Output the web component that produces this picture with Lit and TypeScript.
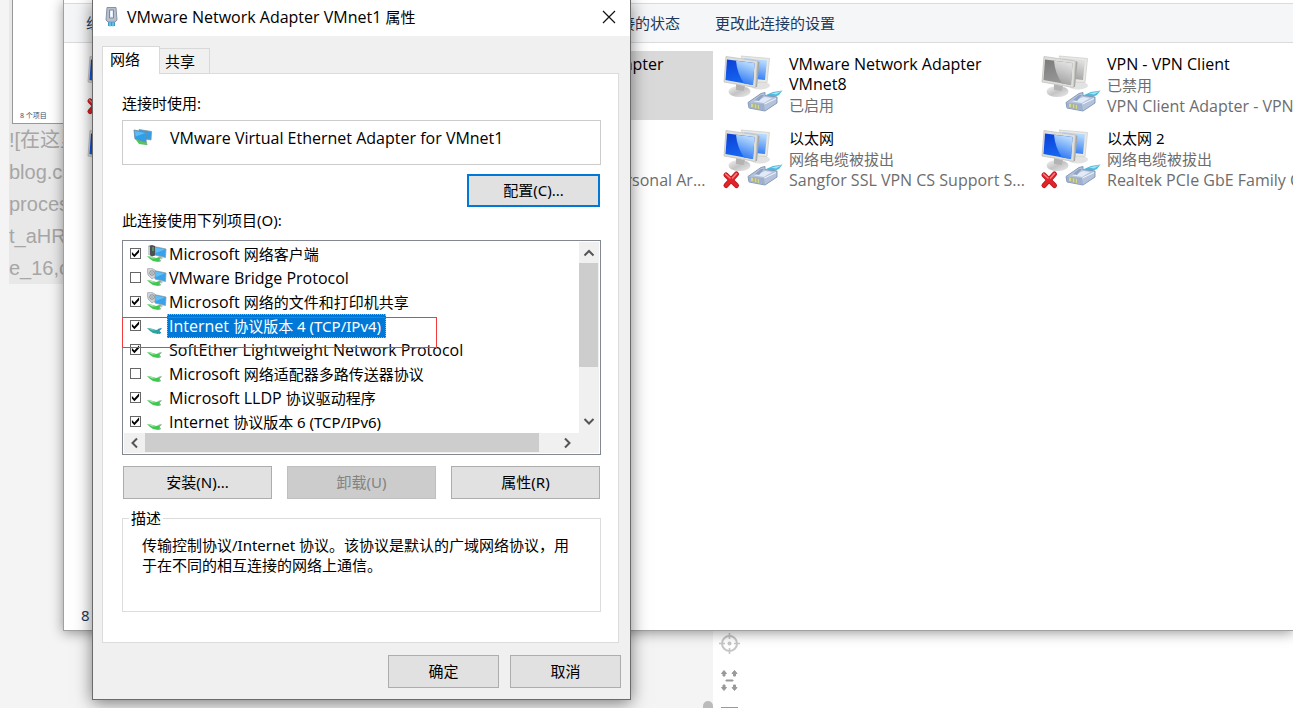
import { LitElement, html, svg, css, nothing } from "lit";
import { customElement, property, state } from "lit/decorators.js";

const reset = css`
  :host { display: block; box-sizing: border-box; }
  *, *::before, *::after { box-sizing: border-box; }
  button { font: inherit; color: inherit; margin: 0; padding: 0; border: 0; background: none; }
  .latin { font-family: "Open Sans", "Noto Sans", sans-serif; font-size: 16px; }
`;

interface Connection {
  name: string;
  status: string;
  device: string;
  disabled?: boolean;
  unplugged?: boolean;
  selected?: boolean;
}

interface Protocol {
  name: string;
  checked: boolean;
  kind: "client" | "service" | "protocol";
}

const CONNECTIONS: Connection[] = [
  { name: "", status: "", device: "", unplugged: true },
  { name: "VMware Network Adapter", status: "", device: "", selected: true },
  { name: "VMware Network Adapter VMnet8", status: "已启用", device: "" },
  { name: "VPN - VPN Client", status: "已禁用", device: "VPN Client Adapter - VPN", disabled: true },
  { name: "", status: "", device: "" },
  { name: "蓝牙网络连接", status: "未连接", device: "Bluetooth Device (Personal Ar..." },
  { name: "以太网", status: "网络电缆被拔出", device: "Sangfor SSL VPN CS Support S...", unplugged: true },
  { name: "以太网 2", status: "网络电缆被拔出", device: "Realtek PCIe GbE Family Controller", unplugged: true },
];

const PROTOCOLS: Protocol[] = [
  { name: "Microsoft 网络客户端", checked: true, kind: "client" },
  { name: "VMware Bridge Protocol", checked: false, kind: "service" },
  { name: "Microsoft 网络的文件和打印机共享", checked: true, kind: "service" },
  { name: "Internet 协议版本 4 (TCP/IPv4)", checked: true, kind: "protocol" },
  { name: "SoftEther Lightweight Network Protocol", checked: true, kind: "protocol" },
  { name: "Microsoft 网络适配器多路传送器协议", checked: false, kind: "protocol" },
  { name: "Microsoft LLDP 协议驱动程序", checked: true, kind: "protocol" },
  { name: "Internet 协议版本 6 (TCP/IPv6)", checked: true, kind: "protocol" },
];

/* Latin words that open a label are set one size larger than the Chinese after them */
function label(text: string) {
  const lead = /^[A-Za-z][\x20-\x7e]*/.exec(text)?.[0] ?? "";
  return lead ? html`<span class="latin">${lead}</span>${text.slice(lead.length)}` : text;
}

/* Two monitors with an ethernet plug in front */
@customElement("connection-icon")
class ConnectionIcon extends LitElement {
  @property({ type: Boolean }) off = false;
  @property({ type: Boolean }) unplugged = false;

  static styles = [reset, css`
    .icon { display: block; width: 62px; height: 62px; }
  `];

  render() {
    const dark = this.off ? "#7b7b7b" : "#0a3fd6";
    const mid = this.off ? "#989898" : "#1768f2";
    const light = this.off ? "#dedede" : "#b4d8fd";
    return html`
      <svg class="icon" viewBox="0 0 62 62" aria-hidden="true">
        <defs>
          <linearGradient id="screen" x1="0" y1="0" x2="0.3" y2="1">
            <stop offset="0" stop-color=${dark}></stop>
            <stop offset="1" stop-color=${mid}></stop>
          </linearGradient>
          <linearGradient id="glare" x1="0.3" y1="0" x2="0" y2="1">
            <stop offset="0" stop-color=${light}></stop>
            <stop offset="1" stop-color=${mid}></stop>
          </linearGradient>
          <linearGradient id="foot" x1="0" y1="0" x2="1" y2="1">
            <stop offset="0" stop-color="#f4f4f4"></stop>
            <stop offset="0.5" stop-color="#c4c4c4"></stop>
            <stop offset="1" stop-color="#ececec"></stop>
          </linearGradient>
        </defs>
        <ellipse cx="38" cy="31.500" rx="10" ry="4" fill="#e2e2e2"></ellipse>
        <path d="M19 2 L47.500 4.500 L45 28.500 L33 28 Z" fill="#e8e8e5" stroke="#cfcfca" stroke-width="0.800"></path>
        <path d="M22 4 L45 6.500 L43 26 L34 25 Z" fill="url(#glare)"></path>
        <path d="M35.500 7 L37.500 8 L35 33 L33 33 Z" fill="#a6a6a2"></path>
        <ellipse cx="17.500" cy="37.500" rx="11" ry="5.500" fill="url(#foot)"></ellipse>
        <path d="M14 30 L23 32 L21.500 37 L14 36 Z" fill="#b3b3b3"></path>
        <path d="M4 2.500 L35.500 7 L33.500 33.500 L2 28 Z" fill="#dededb" stroke="#c2c2be" stroke-width="0.800"></path>
        <path d="M5 5.500 L32.500 9 L31 31 L3.500 26 Z" fill="url(#screen)"></path>
        <path d="M14 6.700 L32.500 9 L31 31 L22 29.500 Q15 19 14 6.700 Z" fill="url(#glare)"></path>
        <path d="M44 41 L51 38 L60.500 36.500 L57 41 L50 44 Z" fill="#4fb9dc"></path>
        <path d="M49 39.500 L60 37 L54 40.500 Z" fill="#a5e3f5"></path>
        <path d="M26 48.500 L39 39.500 L43 38.500 L43 41.500 L55 43 L55 49 L43 57 L27 54 Z" fill="#b4c3db" stroke="#7e92b3" stroke-width="0.900"></path>
        <path d="M27 48.500 L42 50 L43 56.500 L27 53.500 Z" fill="#9db0cf"></path>
        <path d="M29 49.500 L37 51 L37 55 L29 53 Z" fill="#d5d68c"></path>
        <path d="M32 50 V54 M35 50.500 V54.500" stroke="#8c977f" stroke-width="0.900"></path>
        <path d="M32 47.500 L43 43 L50 44 L42 49 Z" fill="#e1eaf6"></path>
        <path d="M33 46 L39 41 L42 41 L37 47 Z" fill="#8fa2c1"></path>
        <path d="M42.500 50 L54 44.500" stroke="#f3f7fc" stroke-width="1"></path>
        ${this.unplugged ? svg`
          <path d="M4 47 L14.500 57.500 M14.500 46 L4 57.500" stroke="#bb1419" stroke-width="5" stroke-linecap="round"></path>
          <path d="M4 47 L14.500 57.500 M14.500 46 L4 57.500" stroke="#e1242a" stroke-width="3.500" stroke-linecap="round"></path>
          <path d="M3.500 46 L8 50 M14.500 45.500 L10.500 50" stroke="#f58083" stroke-width="1.500" stroke-linecap="round"></path>` : nothing}
      </svg>`;
  }
}

@customElement("connection-tile")
class ConnectionTile extends LitElement {
  @property({ attribute: false }) item!: Connection;

  static styles = [reset, css`
    .tile { display: flex; gap: 5px; height: 69px; padding: 3px 3px 0 3px; }
    .tile.selected { background: #d9d9d9; }
    .text { flex: 1; min-width: 0; color: #6d6d6d; }
    .name { color: #000; line-height: 20px; margin-bottom: 1px; }
    .line { height: 21px; line-height: 21px; white-space: nowrap; }
  `];

  render() {
    const c = this.item;
    return html`
      <div class="tile ${c.selected ? "selected" : ""}">
        <connection-icon ?off=${c.disabled} ?unplugged=${c.unplugged}></connection-icon>
        <div class="text">
          <div class="name">${label(c.name)}</div>
          ${c.status ? html`<div class="line">${c.status}</div>` : nothing}
          ${c.device ? html`<div class="line">${label(c.device)}</div>` : nothing}
        </div>
      </div>`;
  }
}

@customElement("explorer-window")
class ExplorerWindow extends LitElement {
  static styles = [reset, css`
    :host { height: 631px; background: #fff; border: 1px solid #a0a0a0; border-width: 0 0 1px 1px;
      box-shadow: 0 2px 12px rgba(0, 0, 0, 0.4); }
    .frame { display: flex; flex-direction: column; height: 100%; }
    .toolbar { display: flex; align-items: center; gap: 35px; height: 40px; margin-top: 3px; padding: 0 22px;
      background: #f5f6f7; border: 1px solid #dadbdc; border-width: 1px 0; color: #1e395b; white-space: nowrap; }
    .organize { flex: 0 0 439px; text-align: left; }
    .items { flex: 1; display: grid; grid-template-columns: repeat(4, 312px); grid-auto-rows: 69px;
      gap: 5px 6px; padding: 8px 0 0 19px; overflow: hidden; }
    .status { padding: 0 17px; height: 25px; line-height: 20px; color: #1e395b; }
  `];

  render() {
    return html`
      <div class="frame">
        <div class="toolbar">
          <button class="organize">组织</button>
          <button>查看此连接的状态</button>
          <button>更改此连接的设置</button>
        </div>
        <div class="items">
          ${CONNECTIONS.map((c) => html`<connection-tile .item=${c}></connection-tile>`)}
        </div>
        <div class="status">8 个项目</div>
      </div>`;
  }
}

@customElement("protocol-icon")
class ProtocolIcon extends LitElement {
  @property() kind: Protocol["kind"] = "protocol";
  @property({ type: Boolean }) selected = false;

  static styles = [reset, css`
    .icon { display: block; width: 20px; height: 20px; }
  `];

  private monitor() {
    return svg`
      <path d="M7 2.500 L19 5 L18.500 13.500 L8 11 Z" fill="#38a3ea" stroke="#8b9aa6" stroke-width="0.800"></path>
      <path d="M8 3.500 L18 5.500 L8.500 9 Z" fill="#62bdf5"></path>
      <path d="M12 12.500 L16 13.500 L15 15.500 L11 14.500 Z" fill="#b9c1c6"></path>`;
  }

  private cable() {
    const body = this.selected ? "#2aa39c" : "#3fc850";
    const edge = this.selected ? "#2a86c8" : "#9db5a4";
    return svg`
      <path d="M0 12 L6 13 L9 14 L14.500 12.500 L12.500 15 L14 16.500 L11 18 L6 17 L3 15 Z" fill=${body}></path>
      <path d="M0 12 L6 13 L9 14.500 L5 14.500 Z" fill=${this.selected ? "#6cc0c4" : "#a5e0ac"}></path>
      <path d="M11 13.500 L14.500 12.500 M12 17.500 L14 16.500" stroke=${edge} stroke-width="1.300"></path>`;
  }

  render() {
    return html`
      <svg class="icon" viewBox="0 0 20 20" aria-hidden="true">
        ${this.kind === "protocol" ? nothing : this.monitor()}
        ${this.kind === "client" ? svg`
          <path d="M1 2 L5 1 L8 2 L8 11.500 L5 12.500 L1 10 Z" fill="#4d5154"></path>
          <path d="M1 2 L3 2.500 V11.500 L1 10 Z" fill="#c9cdd0"></path>
          <path d="M5 4 H7 M5 6 H7" stroke="#58d068" stroke-width="1"></path>` : nothing}
        ${this.kind === "service" ? svg`
          <path d="M0 1 L4 0 L8 2 V9 L5 11 L1 7 Z" fill="#d0d4d8" stroke="#9aa2a9" stroke-width="0.700"></path>
          <circle cx="5" cy="5" r="2.200" fill="#eef1f3" stroke="#6f777e" stroke-width="0.900"></circle>
          <circle cx="5" cy="5" r="0.800" fill="#5c646b"></circle>` : nothing}
        ${this.cable()}
      </svg>`;
  }
}

@customElement("properties-dialog")
class PropertiesDialog extends LitElement {
  @state() private selected = 3;

  static styles = [reset, css`
    :host { width: 539px; color: #000; line-height: 20px; background: #f0f0f0;
      border: 1px solid #6b6b6b; border-top: 0; box-shadow: 0 3px 16px rgba(0, 0, 0, 0.5); }
    .title { display: flex; align-items: center; gap: 9px; height: 36px; padding: 0 14px 2px 12px; background: #fff; }
    .title h1 { flex: 1; margin: 0; font: inherit; }
    .close { display: flex; }
    .body { padding: 10px 11px 0 9px; }
    .tabs { display: flex; align-items: flex-end; height: 28px; margin-bottom: -1px; }
    .tab { height: 26px; margin-left: -1px; padding: 0 14px 0 5px; border: 1px solid #d9d9d9; background: #f0f0f0; }
    .tab.active { height: 28px; margin: 0; padding: 0 19px 4px 7px; background: #fff; border-bottom: 0; position: relative; }
    .panel { padding: 19px 17px 30px 19px; background: #fff; border: 1px solid #dcdcdc; }
    .adapter { display: flex; gap: 17px; height: 45px; margin: 7px 0 9px; padding: 7px 10px; border: 1px solid #ccc; }
    .btn { height: 33px; padding: 0 0 2px; background: #e1e1e1; border: 1px solid #adadad; text-align: center; }
    .btn.focus { display: block; width: 133px; margin: 0 1px 0 auto; border: 2px solid #0078d7; }
    .btn:disabled { background: #ccc; border-color: #bfbfbf; color: #838383; }
    .list-label { margin: 3px 0 10px; }
    .listbox { position: relative; display: grid; grid-template: 191px 20px / 1fr 20px; height: 215px; padding: 1px; border: 1px solid #828790; }
    .items { margin: 0; padding: 0 0 0 6px; list-style: none; overflow: hidden; }
    .row { display: flex; align-items: center; height: 24px; white-space: nowrap; }
    .check { appearance: none; flex: none; width: 11px; height: 11px; margin: 0 6px 2px 0; border: 1px solid #666; background: #fff; }
    .check:checked::before { content: ""; display: block; width: 9px; height: 9px; background: #000;
      clip-path: polygon(10% 40%, 38% 66%, 90% 8%, 90% 42%, 38% 96%, 10% 68%); }
    .name { height: 24px; padding: 2px 5px 0 2px; }
    .name.selected { color: #fff; background: #0078d7; outline: 1px dotted #ff9a3c; outline-offset: -1px; }
    .vbar { display: flex; flex-direction: column; align-items: center; padding-bottom: 2px; background: #f0f0f0; }
    .hbar { grid-column: 1 / 3; display: flex; align-items: center; padding: 0 22px 0 1px; background: #f0f0f0; }
    .arrow { flex: none; width: 20px; height: 21px; display: grid; place-items: center; }
    .vthumb { flex: 0 0 104px; width: 19px; margin-right: 1px; background: #cdcdcd; }
    .vspace, .hspace { flex: 1; }
    .hthumb { flex: 0 0 394px; height: 19px; margin-bottom: 1px; background: #cdcdcd; }
    .mark { position: absolute; left: -1px; top: 76px; width: 315px; height: 31px; border: 1px solid #f33b3b; pointer-events: none; }
    .actions { display: grid; grid-template-columns: repeat(3, 1fr); gap: 15px; margin: 11px 1px 9px; }
    fieldset { height: 104px; margin: 0; padding: 7px 19px 0; border: 1px solid #dcdcdc; }
    legend { height: 20px; margin-left: -13px; padding: 0 2px; }
    fieldset p { margin: 0; }
    .footer { display: flex; justify-content: flex-end; gap: 11px; padding: 12px 9px 11px; }
    .footer .btn { width: 111px; }
  `];

  private arrow(d: string) {
    return html`<svg width="12" height="12" viewBox="0 0 12 12" aria-hidden="true">
      <path d=${d} fill="none" stroke="#555" stroke-width="2"></path></svg>`;
  }

  render() {
    return html`
      <div class="title">
        <svg width="13" height="20" viewBox="0 0 13 20" aria-hidden="true">
          <path d="M3 13 H10 V19 H3 Z" fill="#2f9fd0"></path>
          <path d="M5 14 V20 M8 14 V20" stroke="#9adcf3" stroke-width="1"></path>
          <path d="M2 0.500 H11 L12 13 L10 15 H3 L1 13 Z" fill="#b4c0cf" stroke="#8593a6" stroke-width="1"></path>
          <path d="M4.500 3 H8.500 V11 H4.500 Z" fill="#e9eef4" stroke="#7c8a9d" stroke-width="1"></path>
          <path d="M6.500 4 V9" stroke="#fff" stroke-width="1"></path>
        </svg>
        <h1>${label("VMware Network Adapter VMnet1 属性")}</h1>
        <button class="close" aria-label="关闭">
          <svg width="14" height="14" viewBox="0 0 14 14" aria-hidden="true">
            <path d="M1 1 L13 13 M13 1 L1 13" stroke="#111" stroke-width="1.200"></path>
          </svg>
        </button>
      </div>
      <div class="body">
        <div class="tabs" role="tablist">
          <button class="tab active" role="tab" aria-selected="true">网络</button>
          <button class="tab" role="tab" aria-selected="false">共享</button>
        </div>
        <div class="panel" role="tabpanel">
          <div>连接时使用:</div>
          <div class="adapter">
            <svg width="20" height="18" viewBox="0 0 20 18" aria-hidden="true">
              <path d="M3 12 L9 11 L14 14 L13 17 L6 16 Z" fill="#4fc956"></path>
              <path d="M12 14 L14 17" stroke="#93a29a" stroke-width="1.500"></path>
              <path d="M6 1.500 L18.500 3.500 L18 12 L7 10 Z" fill="#2e9fe8" stroke="#7d96a9" stroke-width="0.800"></path>
              <path d="M1 2 L13.500 4.500 L13 14 L2 11 Z" fill="#2f9fea" stroke="#6f8ea6" stroke-width="0.900"></path>
              <path d="M2 3 L12.500 5 L2.500 8.500 Z" fill="#5bbcf6"></path>
            </svg>
            <span>${label("VMware Virtual Ethernet Adapter for VMnet1")}</span>
          </div>
          <button class="btn focus">配置(C)...</button>
          <div class="list-label" id="list-label">此连接使用下列项目(O):</div>
          <div class="listbox">
            <ul class="items" aria-labelledby="list-label">
              ${PROTOCOLS.map((p, i) => html`
                <li>
                  <label class="row" @click=${() => (this.selected = i)}>
                    <input class="check" type="checkbox" .checked=${p.checked} />
                    <protocol-icon kind=${p.kind} ?selected=${i === this.selected}></protocol-icon>
                    <span class="name ${i === this.selected ? "selected" : ""}">${label(p.name)}</span>
                  </label>
                </li>`)}
            </ul>
            <div class="vbar">
              <div class="arrow">${this.arrow("M1.500 8.500 L6 4 L10.500 8.500")}</div>
              <div class="vthumb"></div>
              <div class="vspace"></div>
              <div class="arrow">${this.arrow("M1.500 4 L6 8.500 L10.500 4")}</div>
            </div>
            <div class="hbar">
              <div class="arrow">${this.arrow("M8 1.500 L3.500 6 L8 10.500")}</div>
              <div class="hthumb"></div>
              <div class="hspace"></div>
              <div class="arrow">${this.arrow("M4 1.500 L8.500 6 L4 10.500")}</div>
            </div>
            <div class="mark"></div>
          </div>
          <div class="actions">
            <button class="btn">安装(N)...</button>
            <button class="btn" disabled>卸载(U)</button>
            <button class="btn">属性(R)</button>
          </div>
          <fieldset>
            <legend>描述</legend>
            <p>传输控制协议/Internet 协议。该协议是默认的广域网络协议，用于在不同的相互连接的网络上通信。</p>
          </fieldset>
        </div>
      </div>
      <div class="footer">
        <button class="btn">确定</button>
        <button class="btn">取消</button>
      </div>`;
  }
}

@customElement("editor-backdrop")
class EditorBackdrop extends LitElement {
  static styles = [reset, css`
    .panes { display: grid; grid-template-columns: 713px 1fr; height: 100%; background: #fff; }
    .source { display: flex; flex-direction: column; align-items: stretch; padding-left: 9px; background: #f4f4f4; }
    .selection { width: 90px; background: #e8e8e8; height: 284px; color: #a6a6a6; white-space: nowrap;
      font: 20px/32px "Liberation Sans", "Noto Sans CJK SC", sans-serif; }
    .shot { display: flex; align-items: flex-end; height: 124px; margin-left: 3px; padding: 0 7px 2px;
      background: #fff; border: 1px solid #999; border-top: 0; color: #33507a;
      font: 7px/10px "Noto Sans", "Noto Sans CJK SC", sans-serif; }
    .thumb { align-self: flex-end; width: 10px; height: 7px; margin-top: auto; border-radius: 5px 5px 0 0; background: #bbb; }
    .tools { display: flex; flex-direction: column; justify-content: flex-end; align-items: flex-start; gap: 15px; padding-left: 6px; }
    .tool { display: block; }
  `];

  render() {
    return html`
      <div class="panes">
        <div class="source">
          <div class="selection">
            <div class="shot">8 个项目</div>
            <div>![在这里</div>
            <div>blog.cs</div>
            <div>proces</div>
            <div>t_aHR</div>
            <div>e_16,c</div>
          </div>
          <div class="thumb"></div>
        </div>
        <div class="tools">
          <svg class="tool" width="21" height="21" viewBox="0 0 21 21" aria-hidden="true">
            <circle cx="10.500" cy="10.500" r="7.500" fill="none" stroke="#c6c6c6" stroke-width="2"></circle>
            <circle cx="10.500" cy="10.500" r="2" fill="#c6c6c6"></circle>
            <path d="M10.500 0 V6 M10.500 15 V21 M0 10.500 H6 M15 10.500 H21" stroke="#c6c6c6" stroke-width="1.600"></path>
          </svg>
          <svg class="tool" width="21" height="23" viewBox="0 0 21 23" aria-hidden="true">
            <path d="M5 1.500 L7.500 4.500 H6 V7 H4 V4.500 H2.500 Z M15.500 1.500 L18 4.500 H16.500 V7 H14.500 V4.500 H13 Z
              M5 21.500 L7.500 18.500 H6 V16 H4 V18.500 H2.500 Z M15.500 21.500 L18 18.500 H16.500 V16 H14.500 V18.500 H13 Z
              M7 11 H14 V12 H7 Z" fill="#999" stroke="#999" stroke-width="1" stroke-linejoin="round"></path>
          </svg>
          <svg class="tool" width="21" height="1" viewBox="0 0 21 1" aria-hidden="true">
            <path d="M2 0.500 H19" stroke="#999" stroke-width="1"></path>
          </svg>
        </div>
      </div>`;
  }
}

@customElement("app-root")
class AppRoot extends LitElement {
  static styles = [reset, css`
    :host { display: grid; position: relative; height: 100vh; min-height: 700px; overflow: hidden;
      font: 15px/20px "Noto Sans", "Noto Sans CJK SC", sans-serif; }
    .backdrop { display: grid; }
    .explorer { position: absolute; left: 63px; right: 0; top: 0; }
    .dialog { position: absolute; left: 92px; top: 0; }
  `];

  render() {
    return html`
      <editor-backdrop class="backdrop"></editor-backdrop>
      <explorer-window class="explorer"></explorer-window>
      <properties-dialog class="dialog"></properties-dialog>`;
  }
}
